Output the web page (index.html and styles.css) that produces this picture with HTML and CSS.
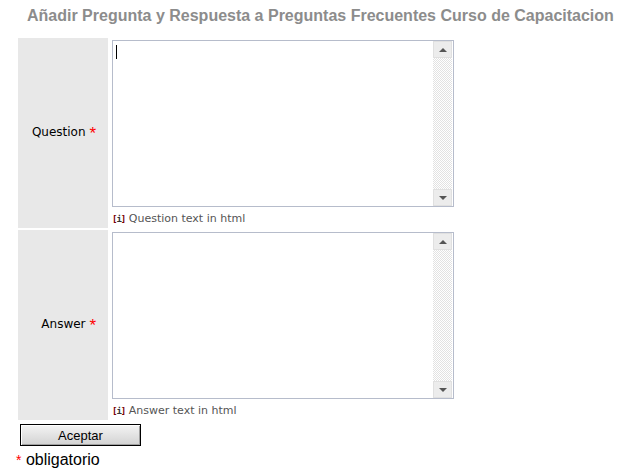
FILE: index.html
```html
<!DOCTYPE html>
<html lang="es">
<head>
    <meta charset="UTF-8">
    <title>Añadir Pregunta y Respuesta</title>
    <link rel="stylesheet" href="styles.css">
</head>
<body>

    <h1 class="page-title">Añadir Pregunta y Respuesta a Preguntas Frecuentes Curso de Capacitacion</h1>

    <form class="faq-form">
        <div class="form-table">
            <div class="label-cell">
                <label for="question">Question <span class="req">*</span></label>
            </div>
            <div class="field-cell">
                <div class="text-box">
                    <textarea id="question" name="question" class="is-active"></textarea>
                    <div class="scroll">
                        <span class="scroll-btn"><span class="arrow-up"></span></span>
                        <span class="scroll-track"></span>
                        <span class="scroll-btn"><span class="arrow-down"></span></span>
                    </div>
                </div>
                <div class="hint"><span class="info"><b>[</b>i<b>]</b></span> Question text in html</div>
            </div>

            <div class="label-cell">
                <label for="answer">Answer <span class="req">*</span></label>
            </div>
            <div class="field-cell">
                <div class="text-box">
                    <textarea id="answer" name="answer"></textarea>
                    <div class="scroll">
                        <span class="scroll-btn"><span class="arrow-up"></span></span>
                        <span class="scroll-track"></span>
                        <span class="scroll-btn"><span class="arrow-down"></span></span>
                    </div>
                </div>
                <div class="hint"><span class="info"><b>[</b>i<b>]</b></span> Answer text in html</div>
            </div>
        </div>

        <button type="submit" class="submit-btn">Aceptar</button>
        <p class="required-note"><span class="req">*</span> obligatorio</p>
    </form>

</body>
</html>
```

FILE: styles.css
```css
body {
    margin: 0;
    background: #fff;
    font-family: "DejaVu Sans", Verdana, sans-serif;
    color: #000;
}
.page-title {
    margin: 0;
    padding: 7px 0 0 27px;
    height: 31px;
    font-family: "Liberation Sans", Arial, sans-serif;
    font-size: 16px;
    font-weight: bold;
    color: #8c8c8c;
    white-space: nowrap;
}
.faq-form {
    margin: 0;
}
.form-table {
    display: grid;
    grid-template-columns: 90px 344px;
    gap: 2px;
    margin-left: 18px;
}
.label-cell {
    background-color: #e8e8e8;
    display: flex;
    align-items: center;
    justify-content: flex-end;
    padding-right: 12px;
    font-size: 12px;
}
.req {
    color: #f00;
    font-family: "Liberation Sans", Arial, sans-serif;
    font-size: 17px;
    vertical-align: -3px;
    line-height: 1;
}
.field-cell {
    padding: 2px 0 2px 2px;
}
.text-box {
    display: flex;
    height: 165px;
    border: 1px solid #b6bccb;
    background: #fff;
}
.text-box textarea {
    flex: 1;
    border: 0;
    margin: 0;
    padding: 2px 3px;
    resize: none;
    outline: none;
    overflow: hidden;
    font-family: "DejaVu Sans", sans-serif;
    font-size: 12px;
}
.text-box textarea.is-active {
    background: linear-gradient(#000, #000) 3px 4px / 1px 14px no-repeat;
}
.scroll {
    width: 19px;
    display: flex;
    flex-direction: column;
    padding-right: 1px;
}
.scroll-btn {
    height: 17px;
    background: #ececec;
    border: 1px solid #e0e0e0;
    box-sizing: border-box;
    display: flex;
    align-items: center;
    justify-content: center;
}
.arrow-up {
    border-left: 4px solid transparent;
    border-right: 4px solid transparent;
    border-bottom: 4px solid #555;
}
.arrow-down {
    border-left: 4px solid transparent;
    border-right: 4px solid transparent;
    border-top: 4px solid #555;
}
.scroll-track {
    flex: 1;
    background: repeating-conic-gradient(#e2e2e2 0 25%, #fff 0 50%) 0 0 / 2px 2px;
}
.hint {
    height: 19px;
    padding-top: 2px;
    box-sizing: border-box;
    line-height: 19px;
    font-size: 11px;
    color: #555;
}
.info {
    font-family: "DejaVu Sans Mono", monospace;
    font-weight: bold;
    font-size: 9px;
    letter-spacing: -1px;
    color: #333;
}
.info b {
    color: #700;
}
.submit-btn {
    display: block;
    margin: 4px 0 0 20px;
    width: 121px;
    height: 22px;
    padding: 0;
    border: 1px solid #000;
    box-shadow: inset 1px 1px 0 #fff, inset -1px -1px 0 #a0a0a0;
    background: linear-gradient(#f4f4f4, #d2d2d2);
    font-family: "Liberation Sans", Arial, sans-serif;
    font-size: 13px;
    color: #000;
}
.required-note {
    margin: 4px 0 0 16px;
    font-family: "Liberation Sans", Arial, sans-serif;
    font-size: 16px;
    line-height: 20px;
}
.required-note .req {
    font-size: 14px;
    vertical-align: 0;
}
```
